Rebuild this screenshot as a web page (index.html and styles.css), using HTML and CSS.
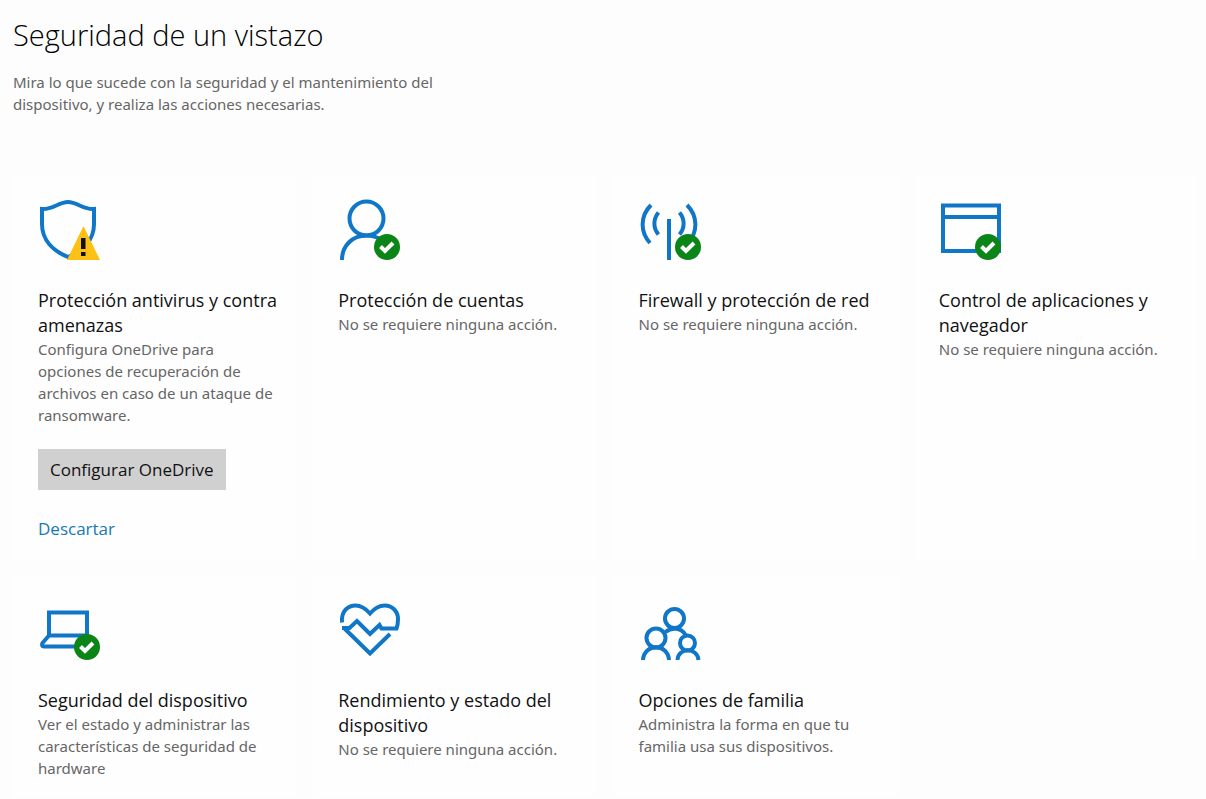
FILE: index.html
```html
<!DOCTYPE html>
<html lang="es">
<head>
    <meta charset="UTF-8">
    <meta name="viewport" content="width=device-width, initial-scale=1.0">
    <title>Seguridad de un vistazo</title>
    <link rel="stylesheet" href="styles.css">
</head>
<body>

    <header class="header">
        <h1>Seguridad de un vistazo</h1>
        <p>Mira lo que sucede con la seguridad y el mantenimiento del dispositivo, y realiza las acciones necesarias.</p>
    </header>

    <main class="grid">
        <section class="card">
            <svg class="icon" viewBox="0 0 64 64" aria-hidden="true">
                <path d="M4 11 C14 12 21 4 30 4 C39 4 46 12 56 11 V26 C56 42 45 53 30 59 C15 53 4 42 4 26 Z"/>
                <path class="warning" d="M45.500 28 L62 62 H29 Z"/>
                <path class="bang" d="M43 40 h4.500 v11 h-4.500 z M43 54 h4.500 v4 h-4.500 z"/>
            </svg>
            <h2>Protección antivirus y contra amenazas</h2>
            <p>Configura OneDrive para opciones de recuperación de archivos en caso de un ataque de ransomware.</p>
            <button type="button" class="btn">Configurar OneDrive</button>
            <a href="#" class="dismiss">Descartar</a>
        </section>

        <section class="card">
            <svg class="icon" viewBox="0 0 64 64" aria-hidden="true">
                <circle cx="28.500" cy="20.500" r="17"/>
                <path d="M4 62 C4 48 14 37.500 28.500 37.500 C34 37.500 39 39 44 42"/>
                <circle class="badge" cx="49" cy="49" r="13"/>
                <path class="check" d="M42.500 48.500 L47 53 L55 45"/>
            </svg>
            <h2>Protección de cuentas</h2>
            <p>No se requiere ninguna acción.</p>
        </section>

        <section class="card">
            <svg class="icon" viewBox="0 0 64 64" aria-hidden="true">
                <path d="M12 7 C1 18 1 34 11 45 M19.500 14.500 C14 21 14 30 19.500 36.500 M48 7 C59 18 59 34 49 45 M40.500 14.500 C46 21 46 30 40.500 36.500 M30 21 V62"/>
                <circle class="badge" cx="49" cy="49" r="13"/>
                <path class="check" d="M42.500 48.500 L47 53 L55 45"/>
            </svg>
            <h2>Firewall y protección de red</h2>
            <p>No se requiere ninguna acción.</p>
        </section>

        <section class="card">
            <svg class="icon" viewBox="0 0 64 64" aria-hidden="true">
                <path d="M4 7.500 H60 V53 H4 Z M4 19 H60"/>
                <circle class="badge" cx="49" cy="49" r="13"/>
                <path class="check" d="M42.500 48.500 L47 53 L55 45"/>
            </svg>
            <h2>Control de aplicaciones y navegador</h2>
            <p>No se requiere ninguna acción.</p>
        </section>

        <section class="card">
            <svg class="icon" viewBox="0 0 64 64" aria-hidden="true">
                <path d="M11 37.500 V14.500 H49 V37.500 Z M11 37.500 L4.500 45 C3.500 47 4 48.500 6 48.500 H40"/>
                <circle class="badge" cx="49" cy="49" r="13"/>
                <path class="check" d="M42.500 48.500 L47 53 L55 45"/>
            </svg>
            <h2>Seguridad del dispositivo</h2>
            <p>Ver el estado y administrar las características de seguridad de hardware</p>
        </section>

        <section class="card">
            <svg class="icon" viewBox="0 0 64 64" aria-hidden="true">
                <path d="M4 24.500 C3 13 10 7.500 17.500 7.500 C24 7.500 28 11 32 15.500 C36 11 40 7.500 46.500 7.500 C54 7.500 60 13 60 21 C60 25 59.500 28 58.500 30.500 H43.500 L41.500 27 L32 36 L19 23 L11.500 30 H4"/>
                <path d="M6.500 30.500 L32 55.500 L52 36"/>
            </svg>
            <h2>Rendimiento y estado del dispositivo</h2>
            <p>No se requiere ninguna acción.</p>
        </section>

        <section class="card">
            <svg class="icon" viewBox="0 0 64 64" aria-hidden="true">
                <circle cx="35.500" cy="20.500" r="9.500"/>
                <circle cx="17" cy="40" r="9.500"/>
                <circle cx="48.500" cy="45" r="7.500"/>
                <path d="M4 62 C5 45 29 45 30 62 M38.500 62 C39 49 58.500 49 59.500 62 M26.500 34 C32 29.500 42 29 46.500 37"/>
            </svg>
            <h2>Opciones de familia</h2>
            <p>Administra la forma en que tu familia usa sus dispositivos.</p>
        </section>
    </main>

</body>
</html>
```

FILE: styles.css
```css
body {
    margin: 0;
    padding: 15px 8px 0 13px;
    background-color: #fdfdfd;
    color: #111;
    font-family: "Open Sans", "Noto Sans", sans-serif;
}
.header {
    padding-bottom: 61px;
}
h1 {
    margin: 0 0 16px;
    font-size: 29px;
    font-weight: 300;
    line-height: 40px;
    color: #000;
}
p {
    margin: 0;
    font-family: "Noto Sans", "Open Sans", sans-serif;
    font-size: 15px;
    line-height: 22px;
    color: #666;
}
.header p {
    max-width: 440px;
}
.grid {
    display: grid;
    grid-template-columns: repeat(4, 1fr);
    gap: 16px;
}
.card {
    display: flex;
    flex-direction: column;
    align-items: flex-start;
    padding: 22px 18px 19px 25px;
    background-color: #fefefe;
}
.icon {
    width: 64px;
    height: 64px;
    margin-bottom: 26px;
    fill: none;
    stroke: #0f76c8;
    stroke-width: 4;
}
.icon .warning {
    fill: #fdc116;
    stroke: none;
}
.icon .bang {
    fill: #111;
    stroke: none;
}
.icon .badge {
    fill: #0b8418;
    stroke: none;
}
.icon .check {
    stroke: #fff;
}
h2 {
    margin: 0;
    font-size: 18px;
    font-weight: 400;
    line-height: 25px;
}
.btn {
    height: 41px;
    margin: 23px 0 27px;
    padding: 0 12px;
    border: none;
    background-color: #d0d0d0;
    color: #111;
    font-family: inherit;
    font-size: 17px;
    cursor: pointer;
}
.btn:hover {
    background-color: #bdbdbd;
}
.dismiss {
    font-size: 17px;
    line-height: 24px;
    color: #1579b5;
    text-decoration: none;
}
.dismiss:hover {
    color: #666;
}
```
